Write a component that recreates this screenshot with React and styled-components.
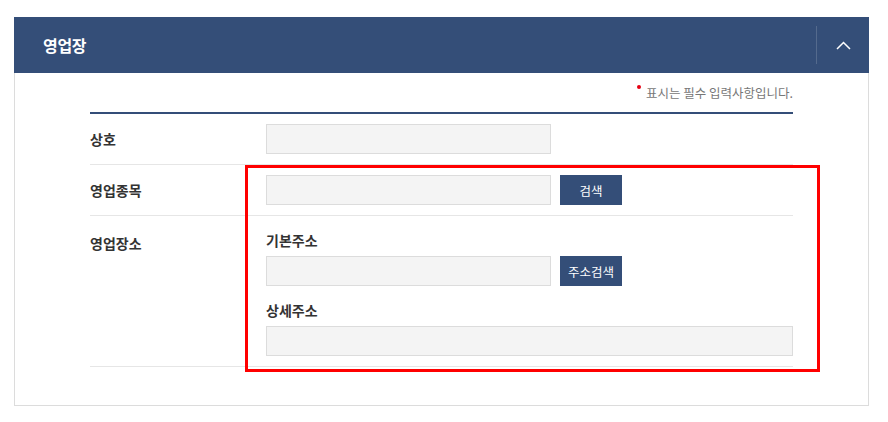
import React from 'react'
import styled, { createGlobalStyle } from 'styled-components'

const NAVY = '#344e78';

//Global
const GlobalStyle = createGlobalStyle`
  body {
    margin: 0;
    background: #fff;
    font-family: "Noto Sans CJK KR", "Noto Sans", sans-serif;
    color: #333;
  }
  * { box-sizing: border-box; }
`;

//Styled
const Panel = styled.section`
  position: relative;
  width: 855px;
  margin: 17px 0 0 14px;
`;

const Header = styled.header`
  height: 56px;
  display: flex;
  align-items: center;
  justify-content: space-between;
  padding-left: 29px;
  background: ${NAVY};
`;

const Title = styled.h2`
  margin: 0;
  color: #fff;
  font-size: 16px;
  font-weight: 700;
  letter-spacing: -0.3px;
`;

const Toggle = styled.button`
  width: 53px;
  height: 38px;
  display: flex;
  align-items: center;
  justify-content: center;
  padding: 0;
  border: 0;
  border-left: 1px solid rgba(255, 255, 255, 0.16);
  background: transparent;
  cursor: pointer;
`;

const Body = styled.div`
  padding: 11px 75px 38px;
  border: 1px solid #dcdcdc;
  border-top: 0;
`;

const Note = styled.p`
  margin: 0 0 10px;
  text-align: right;
  font-size: 12.5px;
  line-height: 18px;
  color: #777;
`;

const Dot = styled.span`
  display: inline-block;
  width: 4px;
  height: 4px;
  margin-right: 5px;
  border-radius: 50%;
  background: #e60012;
  vertical-align: 9px;
`;

const Form = styled.div`
  border-top: 2px solid ${NAVY};
`;

const Row = styled.div`
  display: grid;
  grid-template-columns: 176px 1fr;
  padding: 10px 0;
  border-bottom: 1px solid #e6e6e6;
`;

const Label = styled.div`
  padding-top: ${({ offset }) => offset || 0}px;
  font-size: 14px;
  font-weight: 700;
  line-height: 30px;
  color: #333;
`;

const Field = styled.div`
  height: 30px;
  display: flex;
  gap: 9px;
  align-items: center;
`;

const Group = styled.div`
  display: flex;
  flex-direction: column;
  gap: 2px;
  & + & { margin-top: 10px; }
`;

const SubLabel = styled.div`
  font-size: 14px;
  font-weight: 700;
  line-height: 28px;
  color: #333;
`;

const Input = styled.input`
  width: ${({ full }) => full ? '100%' : '285px'};
  height: 30px;
  padding: 0 8px;
  border: 1px solid #dcdcdc;
  background: #f4f4f4;
  font: inherit;
  outline: none;
`;

const Button = styled.button`
  width: 62px;
  height: 30px;
  padding: 0;
  border: 0;
  background: ${NAVY};
  color: #fff;
  font-family: inherit;
  font-size: 12.5px;
  cursor: pointer;
`;

const Highlight = styled.div`
  position: absolute;
  left: 231px;
  top: 148px;
  width: 575px;
  height: 207px;
  border: 3px solid #ff0000;
  pointer-events: none;
`;

const Chevron = () => (
  <svg width="15" height="9" viewBox="0 0 15 9">
    <polyline points="1,8 7.5,1.5 14,8" fill="none" stroke="#fff" strokeWidth="1.5" />
  </svg>
);

const App = () => {
  return (
    <>
      <GlobalStyle />
      <Panel>
        <Header>
          <Title>영업장</Title>
          <Toggle aria-label="접기"><Chevron /></Toggle>
        </Header>
        <Body>
          <Note><Dot />표시는 필수 입력사항입니다.</Note>
          <Form>
            <Row>
              <Label>상호</Label>
              <Field><Input /></Field>
            </Row>
            <Row>
              <Label>영업종목</Label>
              <Field>
                <Input />
                <Button>검색</Button>
              </Field>
            </Row>
            <Row>
              <Label offset={2}>영업장소</Label>
              <div>
                <Group>
                  <SubLabel>기본주소</SubLabel>
                  <Field>
                    <Input />
                    <Button>주소검색</Button>
                  </Field>
                </Group>
                <Group>
                  <SubLabel>상세주소</SubLabel>
                  <Input full />
                </Group>
              </div>
            </Row>
          </Form>
        </Body>
        <Highlight />
      </Panel>
    </>
  )
}

export default App;
